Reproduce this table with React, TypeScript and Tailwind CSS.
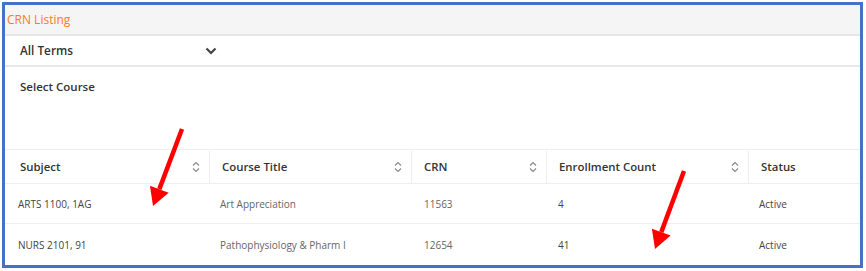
import React from "react";

interface Row {
  subject: string;
  title: string;
  crn: string;
  count: string;
  status: string;
}

const rows: Row[] = [
  { subject: "ARTS 1100, 1AG", title: "Art Appreciation", crn: "11563", count: "4", status: "Active" },
  { subject: "NURS 2101, 91", title: "Pathophysiology & Pharm I", crn: "12654", count: "41", status: "Active" },
];

const columns = [
  { label: "Subject", width: "w-[205px] pl-[15px]", sort: true },
  { label: "Course Title", width: "w-[202px] pl-[12px]", sort: true },
  { label: "CRN", width: "w-[135px] pl-[12px]", sort: true },
  { label: "Enrollment Count", width: "w-[202px] pl-[12px]", sort: true },
  { label: "Status", width: "flex-1 pl-[12px]", sort: false },
];

const SortIcon: React.FC = () => (
  <svg width="8" height="12" viewBox="0 0 8 12" fill="none" stroke="#8a8a8a" strokeWidth="1.2">
    <path d="M1 4.5 L4 1.5 L7 4.5" />
    <path d="M1 7.5 L4 10.5 L7 7.5" />
  </svg>
);

const Arrow: React.FC<{ x1: number; y1: number; x2: number; y2: number }> = ({ x1, y1, x2, y2 }) => {
  const a = Math.atan2(y2 - y1, x2 - x1);
  const len = 18;
  const half = 10;
  const bx = x2 - len * Math.cos(a);
  const by = y2 - len * Math.sin(a);
  const px = -Math.sin(a) * half;
  const py = Math.cos(a) * half;
  return (
    <g>
      <line x1={x1} y1={y1} x2={bx} y2={by} stroke="#ff0000" strokeWidth="4.5" />
      <polygon points={`${x2},${y2} ${bx + px},${by + py} ${bx - px},${by - py}`} fill="#ff0000" />
    </g>
  );
};

const App: React.FC = () => {
  return (
    <div className="relative w-[866px] h-[271px] bg-white pt-[2px] pl-[2px] font-['Open_Sans',sans-serif]">
      <div className="w-[861px] h-[266px] border-[3px] border-[#4472c4] flex flex-col bg-white">
        <div className="h-[31px] shrink-0 bg-[#f4f5f4] border-b-2 border-[#e6e7e6] flex items-center pl-[2px]">
          <span className="text-[12px] text-[#ff7a22]">CRN Listing</span>
        </div>
        <div className="h-[31px] shrink-0 border-b-2 border-[#e8e8e8] flex items-center px-[15px]">
          <span className="w-[185px] text-[11.8px] font-semibold text-[#333]">All Terms</span>
          <svg width="12" height="8" viewBox="0 0 12 8" fill="none" stroke="#444" strokeWidth="2.2">
            <path d="M1.5 1.5 L6 6 L10.5 1.5" />
          </svg>
        </div>
        <div className="h-[83px] shrink-0 border-b border-[#eeeeee] px-[15px] pt-[10px] leading-[17px]">
          <span className="text-[11.5px] font-semibold text-[#333]">Select Course</span>
        </div>
        <div className="flex h-[34px] shrink-0 border-b border-[#eeeeee] pt-[1px]">
          {columns.map((c, i) => (
            <div
              key={c.label}
              className={`${c.width} flex items-center justify-between pr-[9px] ${i < columns.length - 1 ? "border-r border-[#eeeeee]" : ""}`}
            >
              <span className="text-[11.4px] font-semibold text-[#333]">{c.label}</span>
              {c.sort && <SortIcon />}
            </div>
          ))}
        </div>
        {rows.map((r, idx) => (
          <div key={r.crn} className={`flex h-[40px] shrink-0 pt-[2px] text-[10px] text-[#555] ${idx === 0 ? "border-b border-[#eeeeee]" : ""}`}>
            <div className="w-[205px] flex items-center px-[13px] text-[#444]">{r.subject}</div>
            <div className="w-[202px] flex items-center px-[10px] text-[#666]">{r.title}</div>
            <div className="w-[135px] flex items-center px-[12px] text-[#666]">{r.crn}</div>
            <div className="w-[202px] flex items-center px-[11px] text-[#444]">{r.count}</div>
            <div className="flex-1 flex items-center px-[10px] text-[#444]">{r.status}</div>
          </div>
        ))}
      </div>
      <svg className="absolute left-0 top-0 pointer-events-none" width="866" height="271">
        <Arrow x1={182} y1={129} x2={153} y2={206} />
        <Arrow x1={684} y1={171} x2={655} y2={249} />
      </svg>
    </div>
  );
};

export default App;
